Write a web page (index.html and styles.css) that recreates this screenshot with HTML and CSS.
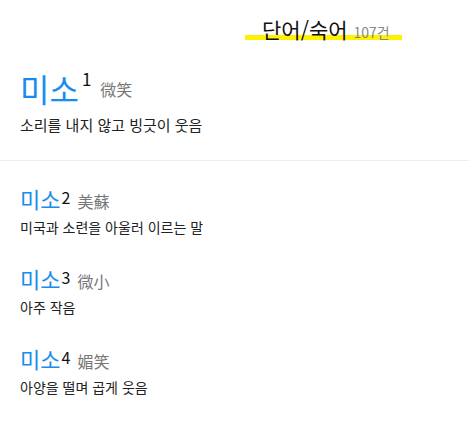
FILE: index.html
```html
<!DOCTYPE html>
<html lang="ko">
<head>
  <meta charset="UTF-8" />
  <meta name="viewport" content="width=device-width, initial-scale=1.0" />
  <title>단어/숙어</title>
  <link rel="stylesheet" href="styles.css">
</head>
<body>

  <div class="top">
    <h1 class="section-title">단어/숙어<span class="count">107건</span></h1>
  </div>

  <div class="entry main">
    <div class="word"><span class="hangul">미소</span><sup>1</sup><span class="hanja">微笑</span></div>
    <p class="mean">소리를 내지 않고 빙긋이 웃음</p>
  </div>

  <div class="list">
    <div class="entry">
      <div class="word"><span class="hangul">미소</span><sup>2</sup><span class="hanja">美蘇</span></div>
      <p class="mean">미국과 소련을 아울러 이르는 말</p>
    </div>
    <div class="entry">
      <div class="word"><span class="hangul">미소</span><sup>3</sup><span class="hanja">微小</span></div>
      <p class="mean">아주 작음</p>
    </div>
    <div class="entry">
      <div class="word"><span class="hangul">미소</span><sup>4</sup><span class="hanja">媚笑</span></div>
      <p class="mean">아양을 떨며 곱게 웃음</p>
    </div>
  </div>

</body>
</html>
```

FILE: styles.css
```css
body {
  margin: 0;
  background: #fff;
  color: #222;
  font-family: "Noto Sans CJK KR", "Noto Sans", sans-serif;
}

.top {
  padding: 18px 0 0 245px;
}

.section-title {
  display: inline-block;
  margin: 0;
  padding: 0 12px 0 17px;
  height: 22px;
  font-size: 21px;
  font-weight: normal;
  line-height: 22px;
  color: #111;
  background: linear-gradient(#fff200, #fff200) no-repeat left bottom / 100% 5px;
}

.count {
  margin-left: 6px;
  font-size: 14px;
  color: #888;
}

.entry {
  padding-left: 20px;
}

.word {
  line-height: 30px;
}

.hangul {
  font-size: 22px;
  color: #1a8cf0;
}

.word sup {
  font-size: 16px;
  line-height: 1;
  vertical-align: 4px;
  margin-left: 1px;
  color: #111;
}

.hanja {
  margin-left: 7px;
  font-size: 16px;
  line-height: 1;
  color: #777;
}

.mean {
  margin: 2px 0 0;
  font-size: 14px;
  line-height: 18px;
}

.main {
  margin: 25px 0 0 0;
  padding: 0 0 26px 20px;
  border-bottom: 1px solid #eee;
}

.main .word {
  line-height: 40px;
}

.main .hangul {
  font-size: 32px;
}

.main sup {
  font-size: 17px;
  vertical-align: 16px;
  margin-left: 3px;
}

.main .hanja {
  margin-left: 9px;
  vertical-align: 6px;
}

.main .mean {
  margin-top: 1px;
  font-size: 15px;
}

.list {
  padding-top: 22px;
}

.list .entry + .entry {
  margin-top: 27px;
}
```
